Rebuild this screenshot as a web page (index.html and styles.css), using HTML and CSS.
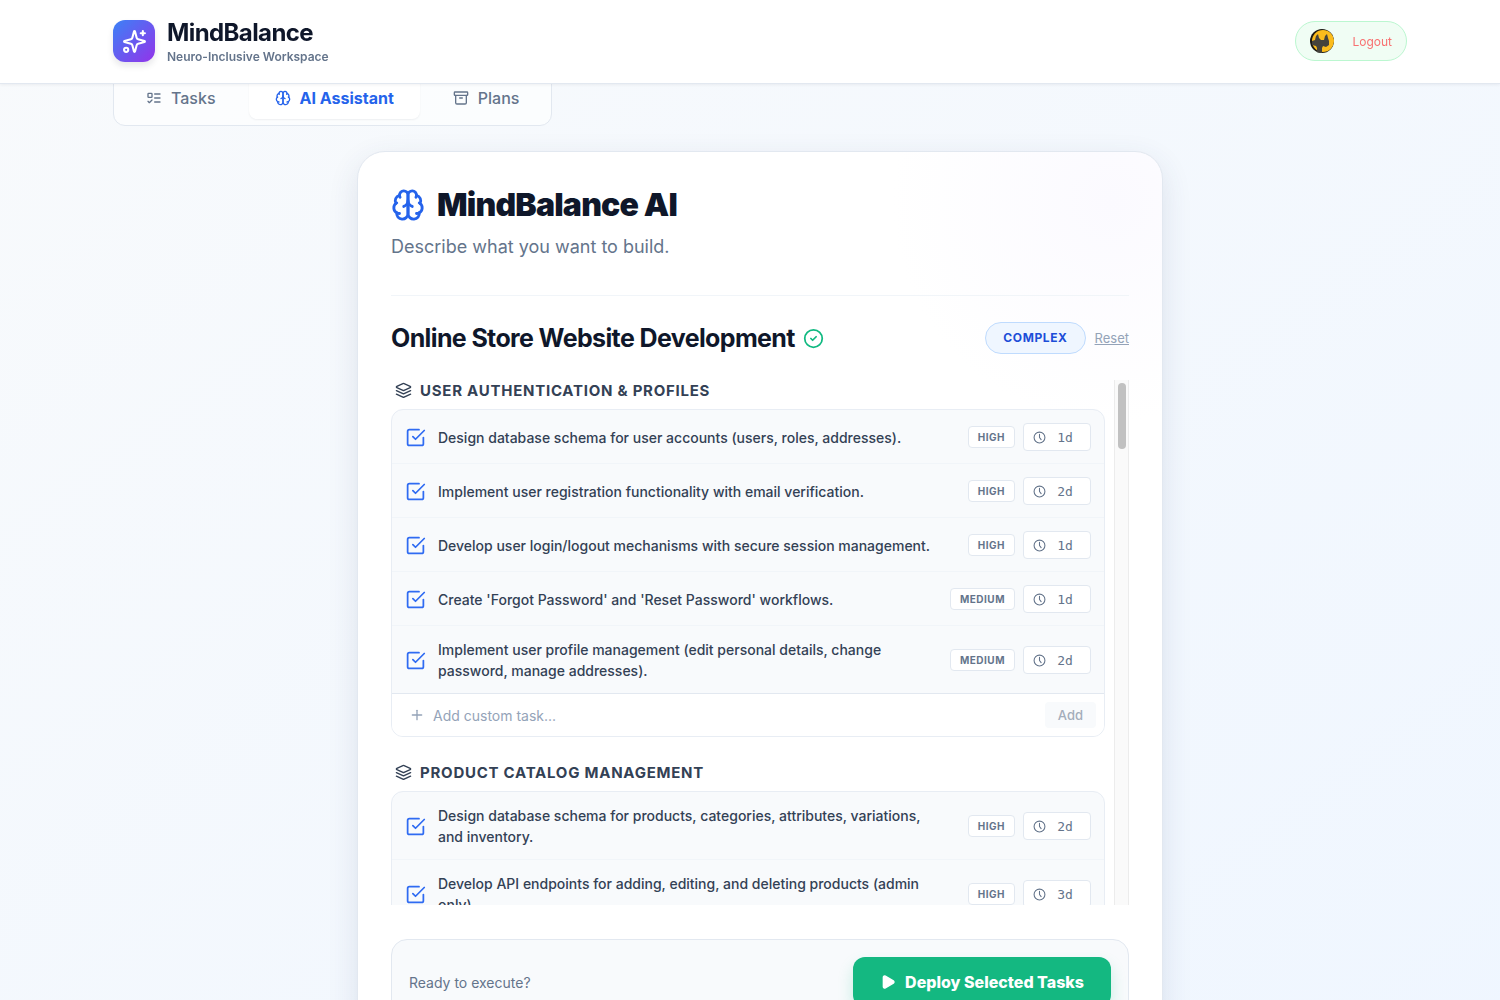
FILE: index.html
```html
<!DOCTYPE html>
<html lang="en">
<head>
    <meta charset="UTF-8">
    <meta name="viewport" content="width=device-width, initial-scale=1.0">
    <title>MindBalance</title>
    <link rel="stylesheet" href="styles.css">
</head>
<body>

    <!-- shared icons -->
    <svg class="sprite" aria-hidden="true">
        <symbol id="icon-brain" viewBox="0 0 24 24">
            <path d="M12 5a3 3 0 1 0-5.997.125 4 4 0 0 0-2.526 5.77 4 4 0 0 0 .556 6.588A4 4 0 1 0 12 18Z"/>
            <path d="M12 5a3 3 0 1 1 5.997.125 4 4 0 0 1 2.526 5.77 4 4 0 0 1-.556 6.588A4 4 0 1 1 12 18Z"/>
            <path d="M15 13a4.5 4.5 0 0 1-3-4 4.5 4.5 0 0 1-3 4"/>
            <path d="M17.599 6.5a3 3 0 0 0 .399-1.375"/>
            <path d="M6.003 5.125A3 3 0 0 0 6.401 6.5"/>
            <path d="M3.477 10.896a4 4 0 0 1 .585-.396"/>
            <path d="M19.938 10.5a4 4 0 0 1 .585.396"/>
            <path d="M6 18a4 4 0 0 1-1.967-.516"/>
            <path d="M19.967 17.484A4 4 0 0 1 18 18"/>
        </symbol>
        <symbol id="icon-layers" viewBox="0 0 24 24">
            <path d="m12.83 2.18a2 2 0 0 0-1.66 0L2.6 6.08a1 1 0 0 0 0 1.83l8.58 3.91a2 2 0 0 0 1.66 0l8.58-3.9a1 1 0 0 0 0-1.83Z"/>
            <path d="m22 12.18-9.17 4.16a2 2 0 0 1-1.66 0L2 12.18"/>
            <path d="m22 17.18-9.17 4.16a2 2 0 0 1-1.66 0L2 17.18"/>
        </symbol>
        <symbol id="icon-check" viewBox="0 0 24 24">
            <path d="m9 11 3 3L22 4"/>
            <path d="M21 12v7a2 2 0 0 1-2 2H5a2 2 0 0 1-2-2V5a2 2 0 0 1 2-2h11"/>
        </symbol>
        <symbol id="icon-clock" viewBox="0 0 24 24">
            <circle cx="12" cy="12" r="10"/>
            <path d="M12 6v6l3 4"/>
        </symbol>
    </svg>

    <header class="header">
        <div class="container header-inner">
            <div class="brand">
                <div class="logo">
                    <svg class="icon" viewBox="0 0 24 24">
                        <path d="M9.937 15.5A2 2 0 0 0 8.5 14.063l-6.135-1.582a.5.5 0 0 1 0-.962L8.5 9.936A2 2 0 0 0 9.937 8.5l1.582-6.135a.5.5 0 0 1 .963 0L14.063 8.5A2 2 0 0 0 15.5 9.937l6.135 1.581a.5.5 0 0 1 0 .964L15.5 14.063a2 2 0 0 0-1.437 1.437l-1.582 6.135a.5.5 0 0 1-.963 0z"/>
                        <path d="M20 2v4"/>
                        <path d="M22 4h-4"/>
                        <circle cx="4" cy="20" r="2"/>
                    </svg>
                </div>
                <div>
                    <div class="brand-name">MindBalance</div>
                    <div class="brand-tagline">Neuro-Inclusive Workspace</div>
                </div>
            </div>
            <div class="account">
                <svg class="avatar" viewBox="0 0 24 24" role="img" aria-label="Profile">
                    <clipPath id="avatar-clip"><circle cx="12" cy="12" r="12"/></clipPath>
                    <g clip-path="url(#avatar-clip)">
                        <rect width="24" height="24" fill="#1c1a14"/>
                        <circle cx="13" cy="12" r="11" fill="#fbbc1c"/>
                        <path d="M2 12l3-1 1-4 2-2 1 4 2 2h3l1-4 2-2 1 4 1 3v4l-3 2-3-1-1 2v5H7v-5l-1-2-4-1z" fill="#45433c"/>
                    </g>
                </svg>
                <button type="button" class="logout">Logout</button>
            </div>
        </div>
    </header>

    <main class="container main">
        <nav class="tabs">
            <button type="button" class="tab">
                <svg class="icon" viewBox="0 0 24 24"><rect x="3" y="5" width="6" height="6" rx="1"/><path d="m3 17 2 2 4-4"/><path d="M13 6h8"/><path d="M13 12h8"/><path d="M13 18h8"/></svg>
                Tasks
            </button>
            <button type="button" class="tab active">
                <svg class="icon"><use href="#icon-brain"/></svg>
                AI Assistant
            </button>
            <button type="button" class="tab">
                <svg class="icon" viewBox="0 0 24 24"><rect x="2" y="3" width="20" height="5" rx="1"/><path d="M4 8v11a2 2 0 0 0 2 2h12a2 2 0 0 0 2-2V8"/><path d="M10 12h4"/></svg>
                Plans
            </button>
        </nav>

        <section class="card">
            <div class="card-header">
                <h1><svg class="icon"><use href="#icon-brain"/></svg>MindBalance AI</h1>
                <p>Describe what you want to build.</p>
            </div>

            <div class="plan-header">
                <h2>
                    Online Store Website Development
                    <svg class="icon" viewBox="0 0 24 24"><circle cx="12" cy="12" r="10"/><path d="m9 12 2 2 4-4"/></svg>
                </h2>
                <div class="plan-actions">
                    <span class="complexity">COMPLEX</span>
                    <button type="button" class="reset">Reset</button>
                </div>
            </div>

            <div class="plan-body">
                <div class="plan-scroll">
                    <div class="group">
                        <h3><svg class="icon"><use href="#icon-layers"/></svg>USER AUTHENTICATION &amp; PROFILES</h3>
                        <div class="task-list">
                            <div class="task">
                                <label class="task-label">
                                    <input type="checkbox" checked>
                                    <svg class="icon"><use href="#icon-check"/></svg>
                                    <span>Design database schema for user accounts (users, roles, addresses).</span>
                                </label>
                                <span class="priority">HIGH</span>
                                <label class="duration"><svg class="icon"><use href="#icon-clock"/></svg><input type="text" value="1d" aria-label="Duration"></label>
                            </div>
                            <div class="task">
                                <label class="task-label">
                                    <input type="checkbox" checked>
                                    <svg class="icon"><use href="#icon-check"/></svg>
                                    <span>Implement user registration functionality with email verification.</span>
                                </label>
                                <span class="priority">HIGH</span>
                                <label class="duration"><svg class="icon"><use href="#icon-clock"/></svg><input type="text" value="2d" aria-label="Duration"></label>
                            </div>
                            <div class="task">
                                <label class="task-label">
                                    <input type="checkbox" checked>
                                    <svg class="icon"><use href="#icon-check"/></svg>
                                    <span>Develop user login/logout mechanisms with secure session management.</span>
                                </label>
                                <span class="priority">HIGH</span>
                                <label class="duration"><svg class="icon"><use href="#icon-clock"/></svg><input type="text" value="1d" aria-label="Duration"></label>
                            </div>
                            <div class="task">
                                <label class="task-label">
                                    <input type="checkbox" checked>
                                    <svg class="icon"><use href="#icon-check"/></svg>
                                    <span>Create 'Forgot Password' and 'Reset Password' workflows.</span>
                                </label>
                                <span class="priority">MEDIUM</span>
                                <label class="duration"><svg class="icon"><use href="#icon-clock"/></svg><input type="text" value="1d" aria-label="Duration"></label>
                            </div>
                            <div class="task">
                                <label class="task-label">
                                    <input type="checkbox" checked>
                                    <svg class="icon"><use href="#icon-check"/></svg>
                                    <span>Implement user profile management (edit personal details, change password, manage addresses).</span>
                                </label>
                                <span class="priority">MEDIUM</span>
                                <label class="duration"><svg class="icon"><use href="#icon-clock"/></svg><input type="text" value="2d" aria-label="Duration"></label>
                            </div>
                            <form class="add-task">
                                <svg class="icon" viewBox="0 0 24 24"><path d="M5 12h14"/><path d="M12 5v14"/></svg>
                                <input type="text" placeholder="Add custom task..." aria-label="Add custom task">
                                <button type="submit" disabled>Add</button>
                            </form>
                        </div>
                    </div>

                    <div class="group">
                        <h3><svg class="icon"><use href="#icon-layers"/></svg>PRODUCT CATALOG MANAGEMENT</h3>
                        <div class="task-list">
                            <div class="task">
                                <label class="task-label">
                                    <input type="checkbox" checked>
                                    <svg class="icon"><use href="#icon-check"/></svg>
                                    <span>Design database schema for products, categories, attributes, variations, and inventory.</span>
                                </label>
                                <span class="priority">HIGH</span>
                                <label class="duration"><svg class="icon"><use href="#icon-clock"/></svg><input type="text" value="2d" aria-label="Duration"></label>
                            </div>
                            <div class="task">
                                <label class="task-label">
                                    <input type="checkbox" checked>
                                    <svg class="icon"><use href="#icon-check"/></svg>
                                    <span>Develop API endpoints for adding, editing, and deleting products (admin only).</span>
                                </label>
                                <span class="priority">HIGH</span>
                                <label class="duration"><svg class="icon"><use href="#icon-clock"/></svg><input type="text" value="3d" aria-label="Duration"></label>
                            </div>
                        </div>
                    </div>
                </div>
                <div class="scrollbar"><div class="thumb"></div></div>
            </div>

            <div class="deploy-bar">
                <span>Ready to execute?</span>
                <button type="button" class="deploy">
                    <svg class="icon" viewBox="0 0 24 24"><path d="M5 5a2 2 0 0 1 3.008-1.728l11.997 6.998a2 2 0 0 1 .003 3.458l-12 7A2 2 0 0 1 5 19z"/></svg>
                    Deploy Selected Tasks
                </button>
            </div>
        </section>
    </main>

</body>
</html>
```
FILE: styles.css
```css
* {
    box-sizing: border-box;
}
body {
    margin: 0;
    min-height: 100vh;
    font-family: Inter, sans-serif;
    color: #0f172a;
    background: linear-gradient(to bottom right, #f8fafc, #eff6ff);
}
h1, h2, h3, p {
    margin: 0;
}
button, input {
    font-family: inherit;
}
button {
    border: none;
    background: none;
    cursor: pointer;
}
.sprite {
    display: none;
}
.icon {
    width: 16px;
    height: 16px;
    flex-shrink: 0;
    fill: none;
    stroke: currentColor;
    stroke-width: 2;
    stroke-linecap: round;
    stroke-linejoin: round;
}
.container {
    width: 100%;
    max-width: 1386px;
    margin: 0 auto;
    padding: 0 36px 0 56px;
}

/* header */
.header {
    position: fixed;
    top: 0;
    left: 0;
    right: 0;
    z-index: 10;
    padding-bottom: 1px;
    background: white;
    border-bottom: 1px solid #e2e8f0;
    box-shadow: 0 1px 3px rgba(15, 23, 42, 0.06);
}
.header-inner {
    height: 82px;
    display: flex;
    align-items: center;
    justify-content: space-between;
}
.brand {
    display: flex;
    align-items: center;
    gap: 12px;
}
.logo {
    width: 42px;
    height: 42px;
    display: flex;
    align-items: center;
    justify-content: center;
    color: white;
    border-radius: 12px;
    background: linear-gradient(to bottom right, #3b82f6, #9333ea);
    box-shadow: 0 4px 6px rgba(15, 23, 42, 0.1);
}
.logo .icon {
    width: 25px;
    height: 25px;
}
.brand-name {
    padding-top: 2px;
    font-size: 24px;
    line-height: 30px;
    font-weight: 700;
    letter-spacing: -0.025em;
}
.brand-tagline {
    font-size: 12px;
    line-height: 18px;
    font-weight: 600;
    color: #64748b;
}
.account {
    display: flex;
    align-items: center;
    gap: 18px;
    height: 40px;
    padding: 0 14px;
    border: 1px solid #bbf7d0;
    border-radius: 20px;
    background: #f0fdf4;
}
.avatar {
    width: 24px;
    height: 24px;
}
.logout {
    padding: 0;
    font-size: 12px;
    color: #f87171;
}

/* tabs */
.main {
    padding-top: 70px;
    padding-bottom: 40px;
}
.tabs {
    width: fit-content;
    display: flex;
    gap: 7px;
    padding: 6px;
    border: 1px solid #e2e8f0;
    border-radius: 12px;
    background: rgba(255, 255, 255, 0.6);
}
.tab {
    display: flex;
    align-items: center;
    gap: 9px;
    height: 42px;
    padding: 0 26px;
    font-size: 16px;
    font-weight: 500;
    color: #64748b;
    border-radius: 8px;
}
.tab.active {
    font-weight: 700;
    color: #2563eb;
    background: white;
    box-shadow: 0 1px 2px rgba(15, 23, 42, 0.06);
}

/* card */
.card {
    max-width: 806px;
    margin: 25px auto 0;
    padding: 33px;
    border: 1px solid #e2e8f0;
    border-radius: 28px;
    background: radial-gradient(circle 220px at calc(100% - 50px) 50px, #fbfaff, rgba(255, 255, 255, 0)) white;
    box-shadow: 0 10px 30px rgba(51, 65, 105, 0.12);
}
.card-header {
    padding-bottom: 34px;
    border-bottom: 1px solid #f1f5f9;
}
.card-header h1 {
    display: flex;
    align-items: center;
    gap: 12px;
    font-size: 32px;
    line-height: 40px;
    font-weight: 900;
    letter-spacing: -0.025em;
}
.card-header .icon {
    width: 34px;
    height: 34px;
    color: #2563eb;
}
.card-header p {
    margin-top: 8px;
    font-size: 18px;
    line-height: 28px;
    color: #64748b;
}
.plan-header {
    display: flex;
    align-items: center;
    justify-content: space-between;
    margin: 25px 0;
}
.plan-header h2 {
    display: flex;
    align-items: center;
    gap: 8px;
    font-size: 25px;
    line-height: 34px;
    font-weight: 700;
    letter-spacing: -0.025em;
}
.plan-header .icon {
    width: 21px;
    height: 21px;
    color: #10b981;
}
.plan-actions {
    display: flex;
    align-items: center;
    gap: 9px;
}
.complexity {
    padding: 6px 17px;
    font-size: 12px;
    line-height: 18px;
    font-weight: 700;
    letter-spacing: 0.05em;
    color: #1d4ed8;
    border: 1px solid #bfdbfe;
    border-radius: 16px;
    background: #eff6ff;
}
.reset {
    padding: 0;
    font-size: 13px;
    color: #94a3b8;
    text-decoration: underline;
}

/* task groups */
.plan-body {
    display: flex;
    gap: 9px;
    height: 525px;
}
.plan-scroll {
    flex: 1;
    overflow-y: auto;
    scrollbar-width: none;
}
.scrollbar {
    width: 15px;
    padding: 3px;
    border: 1px solid #ececec;
    border-width: 0 1px;
    background: #fafafa;
}
.thumb {
    width: 8px;
    height: 66px;
    border-radius: 4px;
    background: #c1c1c1;
}
.group {
    margin-bottom: 25px;
}
.group h3 {
    display: flex;
    align-items: center;
    gap: 8px;
    margin: 0 4px 8px;
    font-size: 15px;
    line-height: 21px;
    font-weight: 700;
    letter-spacing: 0.05em;
    color: #334155;
}
.group h3 .icon {
    width: 17px;
    height: 17px;
}
.task-list {
    border: 1px solid #e8edf4;
    border-radius: 12px;
    overflow: hidden;
    background: #f8fafc;
}
.task {
    display: flex;
    align-items: center;
    gap: 8px;
    padding: 13px 13px 12px;
}
.task + .task {
    border-top: 1px solid #f1f5f9;
}
.task-label {
    position: relative;
    flex: 1;
    display: flex;
    align-items: center;
    gap: 12px;
    padding-right: 16px;
    font-size: 14px;
    line-height: 21px;
    font-weight: 500;
    color: #334155;
    cursor: pointer;
}
.task-label input {
    position: absolute;
    opacity: 0;
    margin: 0;
}
.task-label .icon {
    width: 21px;
    height: 21px;
    color: #cbd5e1;
}
.task-label input:checked + .icon {
    color: #2f6bf2;
}
.priority {
    padding: 3px 9px;
    font-size: 10px;
    line-height: 14px;
    font-weight: 700;
    letter-spacing: 0.05em;
    color: #64748b;
    border: 1px solid #e2e8f0;
    border-radius: 4px;
    background: white;
}
.duration {
    width: 68px;
    height: 28px;
    display: flex;
    align-items: center;
    gap: 4px;
    padding: 0 9px;
    color: #64748b;
    border: 1px solid #e2e8f0;
    border-radius: 4px;
    background: white;
}
.duration .icon {
    width: 13px;
    height: 13px;
}
.duration input {
    width: 30px;
    padding: 0;
    border: none;
    outline: none;
    background: none;
    font-family: "DejaVu Sans Mono", monospace;
    font-size: 13px;
    text-align: center;
    color: #64748b;
}
.add-task {
    display: flex;
    align-items: center;
    gap: 8px;
    height: 43px;
    padding: 0 8px 0 17px;
    border-top: 1px solid #e2e8f0;
    background: white;
    color: #94a3b8;
}
.add-task input {
    flex: 1;
    padding: 0;
    border: none;
    outline: none;
    font-size: 14px;
}
.add-task input::placeholder {
    color: #94a3b8;
}
.add-task button {
    height: 26px;
    padding: 0 13px;
    font-size: 13px;
    font-weight: 500;
    color: #a3adbb;
    border-radius: 4px;
    background: #f8fafc;
}

/* deploy bar */
.deploy-bar {
    display: flex;
    align-items: center;
    justify-content: space-between;
    margin-top: 34px;
    padding: 17px;
    font-size: 14px;
    color: #64748b;
    border: 1px solid #e2e8f0;
    border-radius: 16px;
    background: #f8fafc;
}
.deploy {
    display: flex;
    align-items: center;
    gap: 9px;
    height: 50px;
    padding: 0 27px;
    font-size: 16px;
    font-weight: 800;
    color: white;
    border-radius: 12px;
    background: #14b881;
    box-shadow: 0 8px 16px rgba(16, 185, 129, 0.2);
}
.deploy .icon {
    fill: currentColor;
}
```
